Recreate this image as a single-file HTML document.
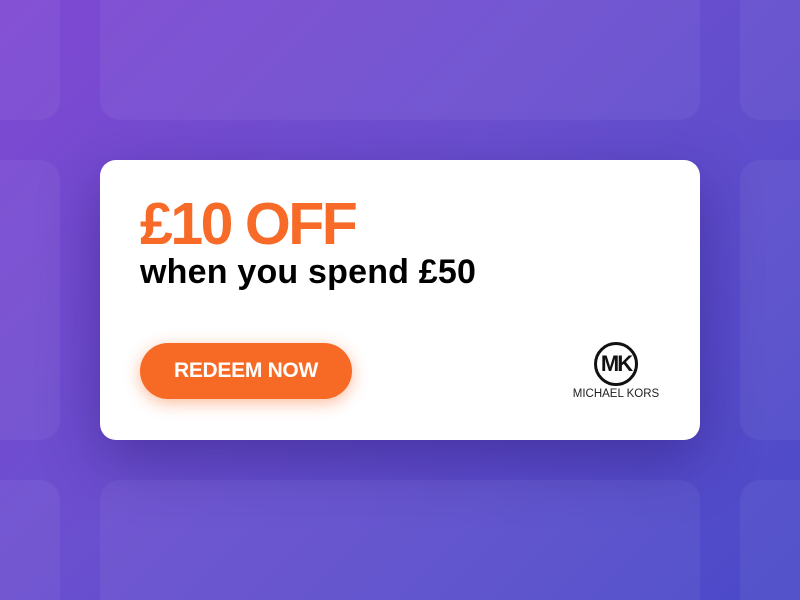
<!DOCTYPE html>
<html><head><meta charset="utf-8"><style>
html,body{margin:0;padding:0;width:800px;height:600px;overflow:hidden}
body{position:relative;background:linear-gradient(135deg,#7f48d2 0%,#6a4fcf 45%,#4a4ac8 100%);font-family:"Liberation Sans",sans-serif}
.t{position:absolute;border-radius:20px;background:rgba(255,255,255,0.05)}
.card{position:absolute;left:100px;top:160px;width:600px;height:280px;background:#fff;border-radius:16px;box-shadow:0 20px 60px rgba(40,20,110,0.45)}
.h1{position:absolute;left:140px;top:192px;font-size:59px;font-weight:bold;color:#f76a27;letter-spacing:-2.5px;line-height:64px;white-space:nowrap}
.h2{position:absolute;left:140px;top:252px;font-size:34px;font-weight:bold;color:#000;letter-spacing:0.2px;line-height:40px;white-space:nowrap}
.btn{position:absolute;left:140px;top:343px;width:212px;height:56px;border-radius:28px;background:#f76a25;box-shadow:0 4px 16px rgba(247,106,37,0.45);color:#fff;font-weight:bold;font-size:21px;line-height:56px;text-align:center;letter-spacing:-0.3px}
.logo{position:absolute;left:594px;top:342px;width:38px;height:38px;border:3px solid #111;border-radius:50%;text-align:center;font-weight:bold;font-size:22px;line-height:38px;letter-spacing:-2px;color:#111}
.mk{position:absolute;left:560px;top:388px;width:112px;text-align:center;font-size:11.5px;color:#222}
</style></head><body>
<div class="t" style="left:-20px;top:-20px;width:80px;height:140px"></div>
<div class="t" style="left:100px;top:-20px;width:600px;height:140px"></div>
<div class="t" style="left:740px;top:-20px;width:80px;height:140px"></div>
<div class="t" style="left:-20px;top:160px;width:80px;height:280px"></div>
<div class="t" style="left:740px;top:160px;width:80px;height:280px"></div>
<div class="t" style="left:-20px;top:480px;width:80px;height:120px;border-bottom-left-radius:0;border-bottom-right-radius:0"></div>
<div class="t" style="left:100px;top:480px;width:600px;height:120px;border-bottom-left-radius:0;border-bottom-right-radius:0"></div>
<div class="t" style="left:740px;top:480px;width:60px;height:120px;border-radius:20px 0 0 0"></div>
<div class="card"></div>
<div class="h1">£10 OFF</div>
<div class="h2">when you spend £50</div>
<div class="btn">REDEEM NOW</div>
<div class="logo">MK</div>
<div class="mk">MICHAEL KORS</div>
</body></html>
